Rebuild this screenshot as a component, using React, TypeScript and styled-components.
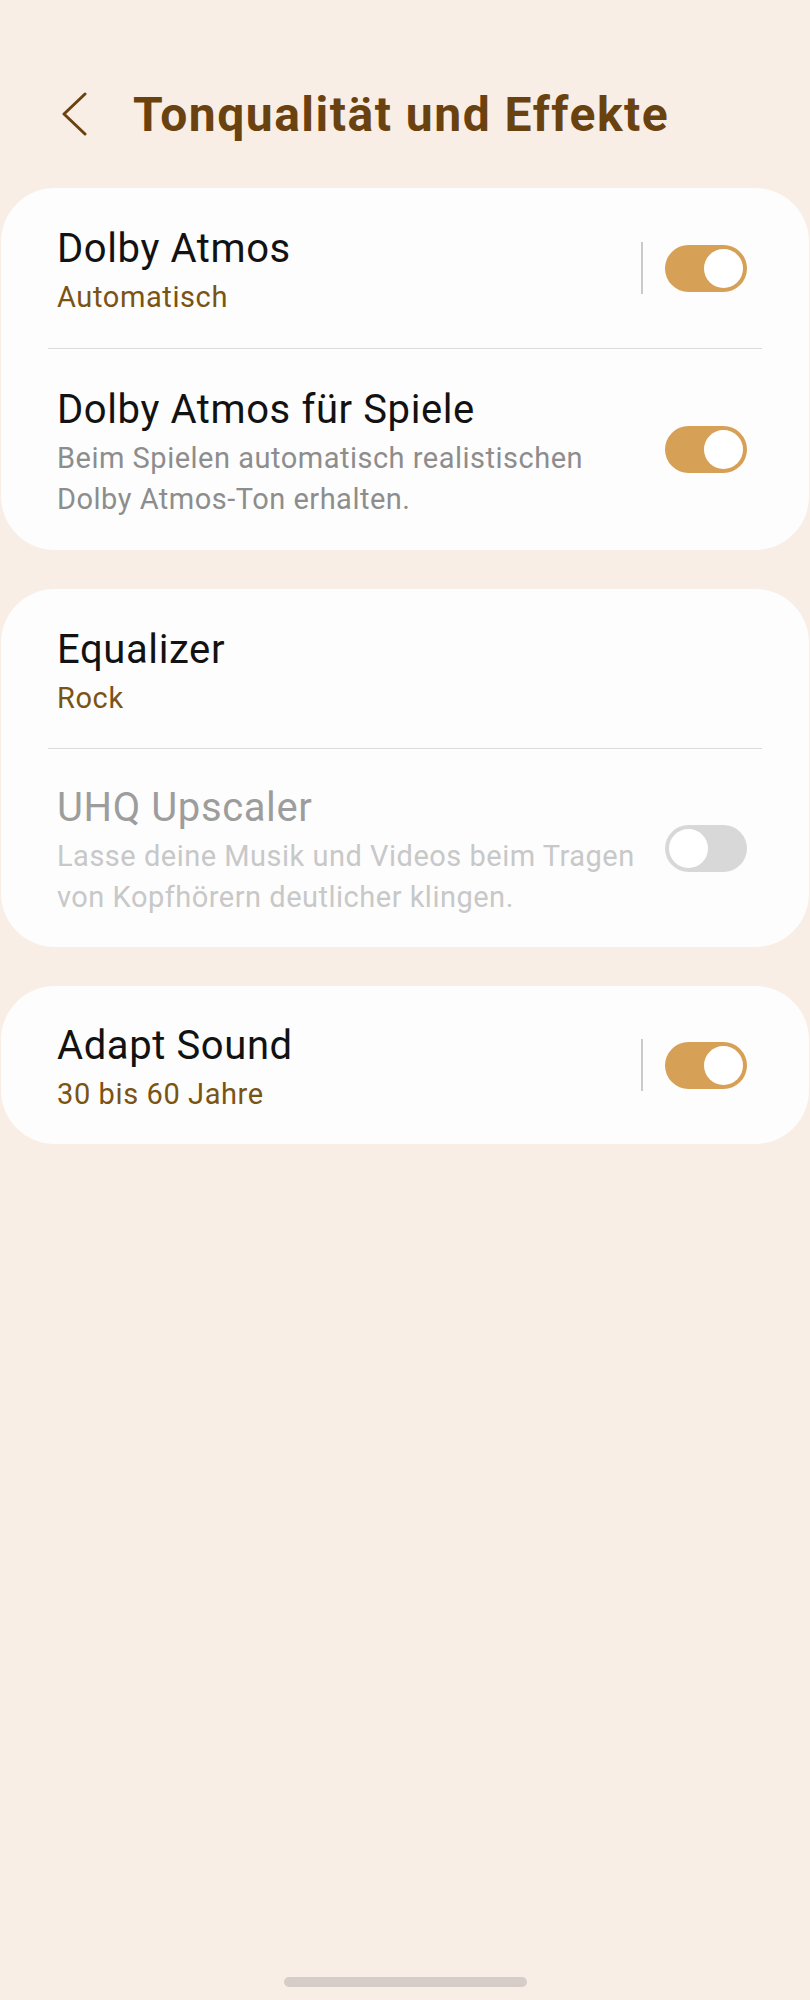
import styled, { createGlobalStyle } from 'styled-components';

const GlobalStyle = createGlobalStyle`
  html, body {
    margin: 0;
    padding: 0;
    background: #f9eee6;
  }
  body {
    font-family: Roboto, "Noto Sans", "Liberation Sans", sans-serif;
    -webkit-font-smoothing: antialiased;
  }
`;

const Screen = styled.div`
  min-height: 2000px;
  display: flex;
  flex-direction: column;
  background: #f9eee6;
`;

const Header = styled.header`
  display: flex;
  align-items: center;
  height: 90px;
  margin-top: 69px;
  padding-left: 60px;
  margin-bottom: 29px;
`;

const BackButton = styled.button`
  display: flex;
  align-items: center;
  justify-content: center;
  width: 30px;
  height: 46px;
  padding: 0;
  border: none;
  background: none;
  margin-right: 43px;
  cursor: pointer;
`;

const Title = styled.h1`
  margin: 0;
  font-size: 48px;
  font-weight: 700;
  color: #6a420f;
  letter-spacing: 1.5px;
`;

const CardList = styled.div`
  display: flex;
  flex-direction: column;
  gap: 39px;
  padding: 0 1px;
`;

const Card = styled.section`
  background: #fdfdfd;
  border-radius: 54px;
`;

const Row = styled.div<{ $height: number }>`
  display: flex;
  align-items: center;
  min-height: ${({ $height }) => $height}px;
  padding: 0 62px 0 56px;
  box-sizing: border-box;
`;

const Divider = styled.hr`
  margin: 0 47px;
  border: none;
  height: 1px;
  background: #dcdcdc;
`;

const TextBlock = styled.div`
  flex: 1;
  display: flex;
  flex-direction: column;
  min-width: 0;
  padding-top: 5px;
`;

const ItemTitle = styled.div<{ $disabled?: boolean }>`
  font-size: 40px;
  line-height: 50px;
  letter-spacing: 0.6px;
  color: ${({ $disabled }) => ($disabled ? '#9d9d9d' : '#121212')};
`;

const ItemValue = styled.div`
  font-size: 29px;
  line-height: 40px;
  margin-top: 3px;
  letter-spacing: 0.6px;
  color: #7b5313;
`;

const ItemDesc = styled.div<{ $disabled?: boolean }>`
  font-size: 29px;
  line-height: 41px;
  margin-top: 3px;
  letter-spacing: 0.5px;
  padding-right: 12px;
  color: ${({ $disabled }) => ($disabled ? '#c8c8c8' : '#8d8d8d')};
`;

const VLine = styled.div`
  width: 2px;
  height: 52px;
  background: #cacaca;
  margin-right: 22px;
`;

const Track = styled.div<{ $on: boolean }>`
  position: relative;
  flex-shrink: 0;
  width: 82px;
  height: 47px;
  border-radius: 24px;
  background: ${({ $on }) => ($on ? '#d6a057' : '#d8d8d8')};
`;

const Knob = styled.div<{ $on: boolean }>`
  position: absolute;
  top: 4px;
  ${({ $on }) => ($on ? 'right: 4px;' : 'left: 4px;')}
  width: 39px;
  height: 39px;
  border-radius: 50%;
  background: #ffffff;
`;

const HomeBar = styled.div`
  margin: auto auto 13px;
  width: 243px;
  height: 10px;
  border-radius: 5px;
  background: #d6cdc8;
`;

const Toggle = ({ on }: { on: boolean }) => (
  <Track $on={on}>
    <Knob $on={on} />
  </Track>
);

export default function App() {
  return (
    <Screen>
      <GlobalStyle />
      <Header>
        <BackButton aria-label="Zurück">
          <svg width="28" height="44" viewBox="0 0 28 44" fill="none">
            <path
              d="M24 2 L3 22 L24 42"
              stroke="#6a420f"
              strokeWidth="3"
              strokeLinecap="round"
              strokeLinejoin="round"
            />
          </svg>
        </BackButton>
        <Title>Tonqualität und Effekte</Title>
      </Header>

      <CardList>
        <Card>
          <Row $height={160}>
            <TextBlock>
              <ItemTitle>Dolby Atmos</ItemTitle>
              <ItemValue>Automatisch</ItemValue>
            </TextBlock>
            <VLine />
            <Toggle on />
          </Row>
          <Divider />
          <Row $height={201}>
            <TextBlock>
              <ItemTitle>Dolby Atmos für Spiele</ItemTitle>
              <ItemDesc>
                Beim Spielen automatisch realistischen Dolby Atmos-Ton erhalten.
              </ItemDesc>
            </TextBlock>
            <Toggle on />
          </Row>
        </Card>

        <Card>
          <Row $height={159}>
            <TextBlock>
              <ItemTitle>Equalizer</ItemTitle>
              <ItemValue>Rock</ItemValue>
            </TextBlock>
          </Row>
          <Divider />
          <Row $height={198}>
            <TextBlock>
              <ItemTitle $disabled>UHQ Upscaler</ItemTitle>
              <ItemDesc $disabled>
                Lasse deine Musik und Videos beim Tragen von Kopfhörern deutlicher klingen.
              </ItemDesc>
            </TextBlock>
            <Toggle on={false} />
          </Row>
        </Card>

        <Card>
          <Row $height={158}>
            <TextBlock>
              <ItemTitle>Adapt Sound</ItemTitle>
              <ItemValue>30 bis 60 Jahre</ItemValue>
            </TextBlock>
            <VLine />
            <Toggle on />
          </Row>
        </Card>
      </CardList>

      <HomeBar />
    </Screen>
  );
}
